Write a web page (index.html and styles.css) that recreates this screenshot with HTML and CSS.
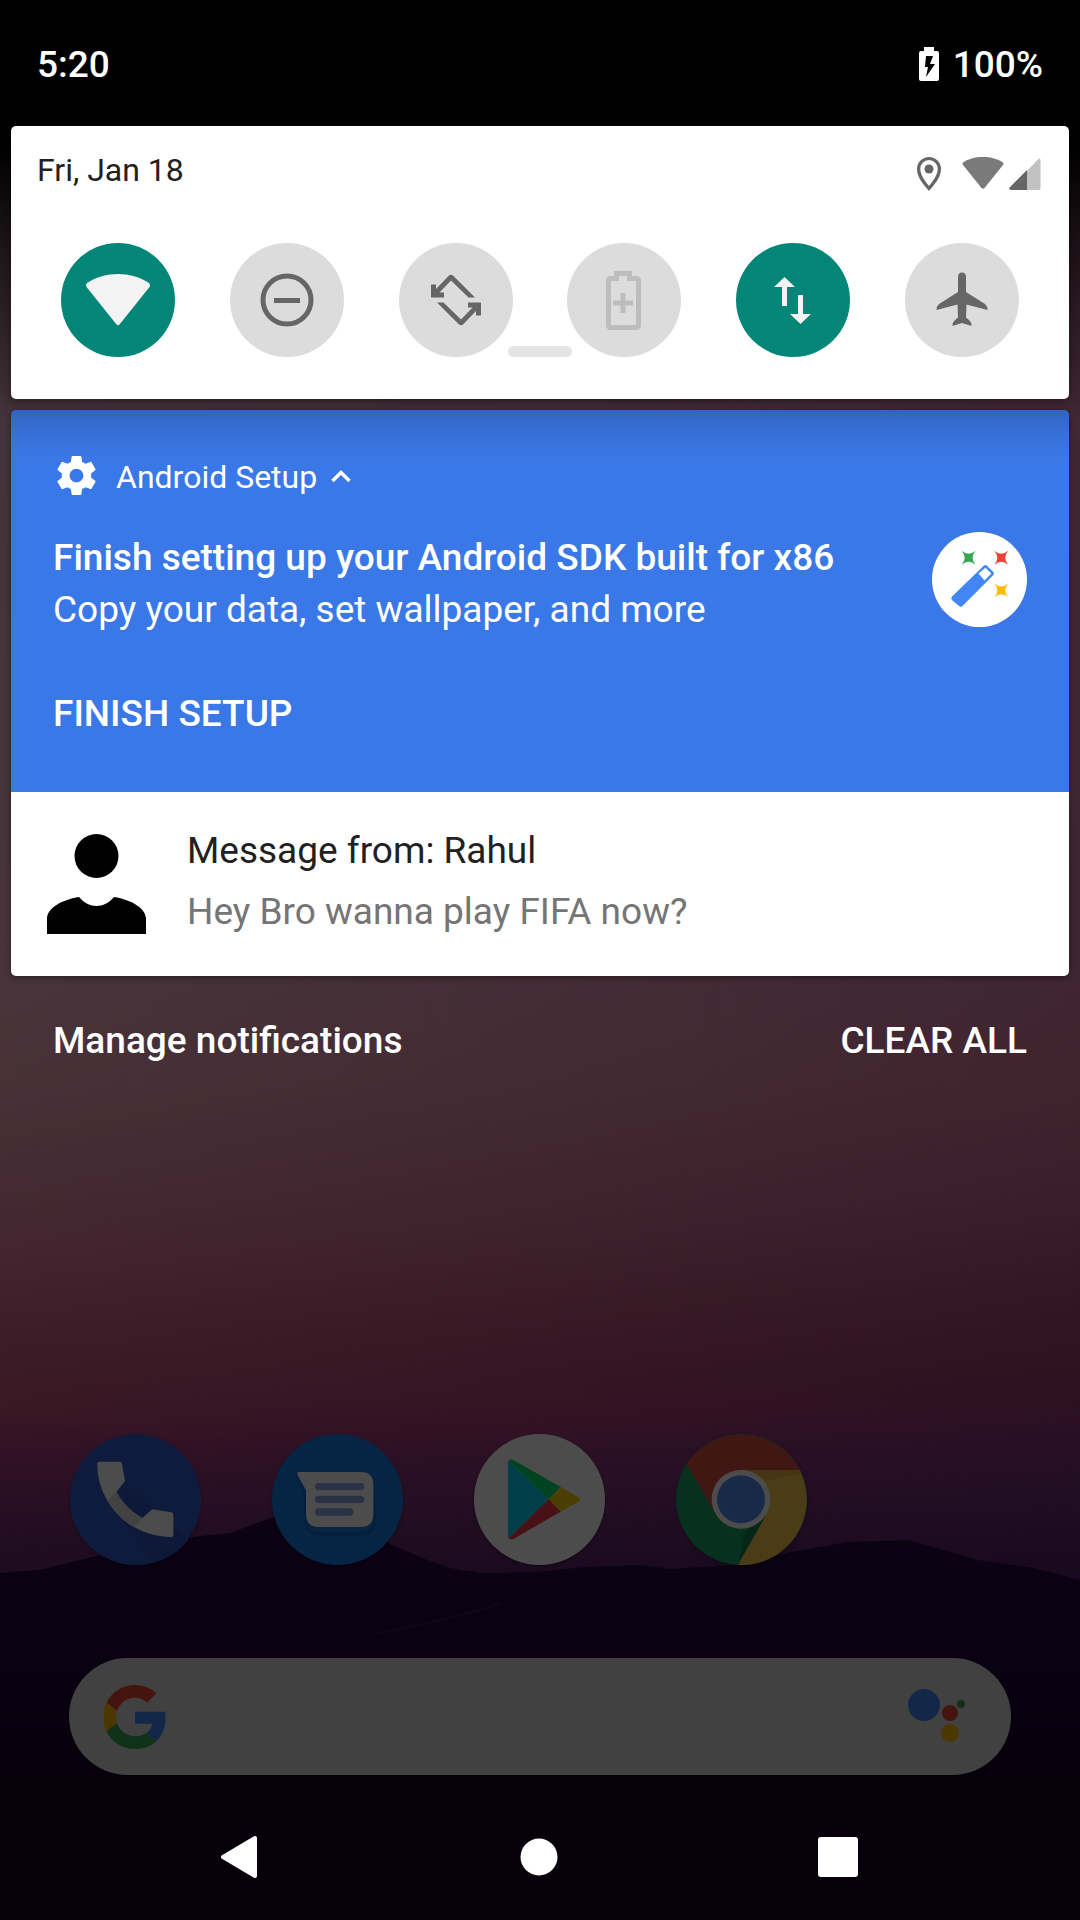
FILE: index.html
```html
<!DOCTYPE html>
<html lang="en">
<head>
<meta charset="utf-8">
<meta name="viewport" content="width=device-width, initial-scale=1">
<title>Notification shade</title>
<link rel="stylesheet" href="styles.css">
</head>
<body>
<div class="screen">

  <svg class="wallpaper" viewBox="0 0 1080 1920" preserveAspectRatio="none" aria-hidden="true">
    <defs>
      <linearGradient id="sky-west" x1="0" y1="400" x2="0" y2="1580" gradientUnits="userSpaceOnUse">
        <stop offset="0" stop-color="#e3aac3"/>
        <stop offset=".48" stop-color="#f2b2c6"/>
        <stop offset=".576" stop-color="#f0a7bb"/>
        <stop offset=".72" stop-color="#e07f9d"/>
        <stop offset=".805" stop-color="#c86182"/>
        <stop offset=".856" stop-color="#c15078"/>
        <stop offset=".89" stop-color="#a73c7d"/>
        <stop offset=".958" stop-color="#782f71"/>
        <stop offset="1" stop-color="#5f2669"/>
      </linearGradient>
      <linearGradient id="sky-east" x1="0" y1="400" x2="0" y2="1580" gradientUnits="userSpaceOnUse">
        <stop offset="0" stop-color="#dc85ad"/>
        <stop offset=".48" stop-color="#d57fa7"/>
        <stop offset=".576" stop-color="#d57899"/>
        <stop offset=".678" stop-color="#c1648c"/>
        <stop offset=".763" stop-color="#a74b71"/>
        <stop offset=".83" stop-color="#993c6b"/>
        <stop offset=".864" stop-color="#933578"/>
        <stop offset=".907" stop-color="#783278"/>
        <stop offset=".958" stop-color="#622871"/>
        <stop offset="1" stop-color="#50216b"/>
      </linearGradient>
      <linearGradient id="fade-east">
        <stop offset="0" stop-color="#000"/>
        <stop offset="1" stop-color="#fff"/>
      </linearGradient>
      <mask id="east-mask"><rect width="1080" height="1920" fill="url(#fade-east)"/></mask>
      <linearGradient id="hills" x1="0" y1="1510" x2="0" y2="1920" gradientUnits="userSpaceOnUse">
        <stop offset="0" stop-color="#28083f"/>
        <stop offset=".35" stop-color="#25053c"/>
        <stop offset=".65" stop-color="#170227"/>
        <stop offset="1" stop-color="#170220"/>
      </linearGradient>
    </defs>
    <rect width="1080" height="1920" fill="url(#sky-west)"/>
    <rect width="1080" height="1920" fill="url(#sky-east)" mask="url(#east-mask)"/>
    <path fill="url(#hills)" d="M0 1573 40 1570 96 1556 150 1544 200 1536 230 1533 270 1518 300 1513 340 1510 390 1544 425 1559 450 1568 482 1573 537 1572 585 1567 640 1565 671 1569 730 1565 792 1552 847 1542 909 1540 978 1560 1033 1568 1080 1580V1920H0Z"/>
    <path fill="none" stroke="#34144a" stroke-width="2" d="M375 1634Q440 1622 500 1604"/>
  </svg>

  <main class="home">
    <nav class="dock" aria-label="Favorite apps">
      <a class="app" href="#phone" aria-label="Phone">
        <svg viewBox="0 0 393 393">
          <circle cx="196.500" cy="196.500" r="196.500" fill="#335cc8"/>
          <path fill="#2f56c0" d="M165 141 355 318A196 196 0 0 1 250 386L160 270Z"/>
          <path fill="#fff" d="M90 83H149Q155 83 156 89L165 141 139 174C158 208 183 233 217 252L247 226 304 235Q310 236 310 242V303Q310 309 304 309C182 309 82 210 82 91Q82 83 90 83Z"/>
          <path fill="#dedede" d="M113 199 139 174C158 208 183 233 217 252L193 279C157 260 134 236 113 199Z"/>
        </svg>
      </a>
      <a class="app" href="#messages" aria-label="Messages">
        <svg viewBox="0 0 393 393">
          <circle cx="196.500" cy="196.500" r="196.500" fill="#1778e0"/>
          <path fill="#0f5fb8" d="M76 124 104 184V256Q106 294 142 294H266Q304 292 304 250L312 180V270Q308 304 266 306H142Q100 304 96 260V190Z" opacity=".5"/>
          <path fill="#fff" d="M82 114H266Q304 114 304 152V241Q304 279 266 279H140Q102 279 102 241V169L77 123Q73 114 82 114Z"/>
          <path stroke="#8ca8f0" stroke-width="22" stroke-linecap="round" d="M140 158H266M140 196H266M140 234H233"/>
        </svg>
      </a>
      <a class="app" href="#play" aria-label="Play Store">
        <svg viewBox="0 0 393 393">
          <circle cx="196.500" cy="196.500" r="196.500" fill="#fff"/>
          <path fill="#00d0f5" d="M104 80 224 196 104 313Q102 311 102 304V89Q102 82 104 80Z"/>
          <path fill="#00e070" d="M104 80Q111 73 122 80L260 159 224 196Z"/>
          <path fill="#ffd000" d="M260 159 311 188Q325 197 311 205L260 233 224 196Z"/>
          <path fill="#f5364c" d="M104 313 224 196 260 233 120 314Q110 318 104 313Z"/>
        </svg>
      </a>
      <a class="app" href="#chrome" aria-label="Chrome">
        <svg viewBox="0 0 393 393">
          <circle cx="196.500" cy="196.500" r="196.500" fill="#1aa064"/>
          <path fill="#db4f40" d="M32 90A196.500 196.500 0 0 1 371 108H195L119 240Z"/>
          <path fill="#f7c84a" d="M371 108A196.500 196.500 0 0 1 185 393L271 240 195 108Z"/>
          <path fill="#e6b642" d="M215 108H371L376 118 275 140Z"/>
          <path fill="#148050" d="M185 393 264 254 210 290Z"/>
          <circle cx="195" cy="196" r="88" fill="#fff"/>
          <circle cx="195" cy="196" r="72" fill="#568cf0"/>
        </svg>
      </a>
    </nav>
    <form class="search" role="search">
      <svg class="google" viewBox="3 2 42 44" aria-hidden="true">
        <path fill="#ea4335" d="M24 9.500c3.540 0 6.710 1.220 9.210 3.600l6.850-6.850C35.900 2.380 30.470 0 24 0 14.620 0 6.510 5.380 2.560 13.220l7.980 6.190C12.430 13.720 17.740 9.500 24 9.500z" transform="translate(2 2) scale(.917)"/>
        <path fill="#4285f4" d="M46.980 24.550c0-1.570-.15-3.090-.38-4.550H24v9.020h12.940c-.58 2.960-2.260 5.480-4.780 7.180l7.730 6c4.510-4.180 7.090-10.360 7.090-17.650z" transform="translate(2 2) scale(.917)"/>
        <path fill="#fbbc05" d="M10.530 28.590c-.48-1.450-.76-2.990-.76-4.590s.27-3.140.76-4.590l-7.980-6.190C.92 16.460 0 20.120 0 24c0 3.880.92 7.540 2.560 10.780l7.970-6.190z" transform="translate(2 2) scale(.917)"/>
        <path fill="#34a853" d="M24 48c6.480 0 11.930-2.130 15.890-5.810l-7.730-6c-2.150 1.450-4.920 2.300-8.160 2.300-6.260 0-11.570-4.220-13.470-9.910l-7.980 6.190C6.510 42.620 14.620 48 24 48z" transform="translate(2 2) scale(.917)"/>
      </svg>
      <input class="search-box" type="search" aria-label="Google search">
      <button class="assistant" type="button" aria-label="Google Assistant">
        <svg viewBox="0 0 60 60">
          <circle cx="17" cy="18" r="16" fill="#4285f4"/>
          <circle cx="43" cy="26" r="8" fill="#ea4335"/>
          <circle cx="54" cy="17" r="4" fill="#34a853"/>
          <circle cx="43" cy="46" r="9" fill="#fbbc05"/>
        </svg>
      </button>
    </form>
  </main>

  <div class="shade">
    <header class="status">
      <time datetime="17:20">5:20</time>
      <div class="battery">
        <svg class="battery-icon" viewBox="0 0 20 34" aria-hidden="true">
          <path fill="#fff" fill-rule="evenodd" d="M5 0H15V4H18Q20 4 20 6V32Q20 34 18 34H2Q0 34 0 32V6Q0 4 2 4H5ZM7 9 6 20H9L7 30 16 17H11L14 9Z"/>
        </svg>
        <span>100%</span>
      </div>
    </header>

    <section class="quick" aria-label="Quick settings">
      <div class="quick-head">
        <time datetime="01-18">Fri, Jan 18</time>
        <svg class="signals" viewBox="0 0 124 34" role="img" aria-label="Location on, Wi-Fi connected, mobile signal half">
          <path fill="#666" fill-rule="evenodd" d="M12 0A12 12 0 0 0 0 12C0 20 6 27 12 34 18 27 24 20 24 12A12 12 0 0 0 12 0ZM12 3A8.700 8.700 0 0 1 20.700 12C20.700 17 17 23 12 29 7 23 3.300 17 3.300 12A8.700 8.700 0 0 1 12 3Z"/>
          <circle cx="12" cy="12" r="4.500" fill="#666"/>
          <path fill="#7a7a7a" d="M46 5.500C58-2 74-2 86 5.500Q87 6.500 86 8L67.500 31Q66 32.500 64.500 31L46 8Q45 6.500 46 5.500Z"/>
          <path fill="#c2c2c2" d="M110 14 120.500 3Q123 0 123.500 3V31Q123.500 33 122 33H110Z"/>
          <path fill="#666" d="M110 13V33H94Q91 32.500 93 30Z"/>
        </svg>
      </div>
      <div class="tiles">
        <button class="tile on" type="button" aria-pressed="true" aria-label="Wi-Fi">
          <svg viewBox="-57 -57 114 114"><path fill="#f4f4f4" d="M-31-17C-13-29 13-29 31-17Q33-15 31.500-13L1.500 24.500Q0 26-1.500 24.500L-31.500-13Q-33-15-31-17Z"/></svg>
        </button>
        <button class="tile" type="button" aria-pressed="false" aria-label="Do not disturb">
          <svg viewBox="-57 -57 114 114"><g fill="none" stroke="#666" stroke-width="5"><circle r="24"/><path d="M-13 .5H13"/></g></svg>
        </button>
        <button class="tile" type="button" aria-pressed="false" aria-label="Auto-rotate">
          <svg viewBox="-57 -57 114 114"><g fill="#666"><path id="turn" d="M-25-15.500H-20V-11L-7-24.500Q-5-26-3-24.500L19-2.500H12.500L-5-19.500-16.500-7.500H-12V-2.500H-25Z"/><use href="#turn" transform="rotate(180)"/></g></svg>
        </button>
        <button class="tile" type="button" aria-label="Battery Saver" disabled>
          <svg viewBox="-57 -57 114 114"><g fill="none" stroke="#bdbdbd" stroke-width="5"><path d="M-7.500-26.500H5.500V-21.500H12Q14.500-21.500 14.500-19V25Q14.500 27.500 12 27.500H-13Q-15.500 27.500-15.500 25V-19Q-15.500-21.500-13-21.500H-7.500Z"/><path d="M-11 3H9M-1-7V13"/></g></svg>
        </button>
        <button class="tile on" type="button" aria-pressed="true" aria-label="Mobile data">
          <svg viewBox="-57 -57 114 114"><path fill="#f4f4f4" d="M-8.500-23 2-13H-6V6H-11V-13H-19ZM7.500 24-3 14H5V-5H10V14H18Z"/></svg>
        </button>
        <button class="tile" type="button" aria-pressed="false" aria-label="Airplane mode">
          <svg viewBox="-57 -57 114 114"><path fill="#666" d="M0-27.500Q4-27.500 4-23V-8L23 4Q25.500 6 25.500 10L4.500 4.500 4 17.500 7 20Q9.500 22 9.500 26L0 23-9.500 26Q-9.500 22-7 20L-4 17.500-4.500 4.500-25.500 10Q-25.500 6-23 4L-4-8V-23Q-4-27.500 0-27.500Z"/></svg>
        </button>
      </div>
      <span class="handle"></span>
    </section>

    <section class="notices" aria-label="Notifications">
      <article class="setup">
        <header class="setup-head">
          <svg class="gear" viewBox="0 0 24 24" aria-hidden="true"><path fill="#fff" d="M19.430 12.980c.04-.32.07-.64.07-.98s-.03-.66-.07-.98l2.110-1.650c.19-.15.24-.42.12-.64l-2-3.460c-.12-.22-.39-.3-.61-.22l-2.490 1c-.52-.4-1.080-.73-1.690-.98l-.38-2.650C14.460 2.180 14.250 2 14 2h-4c-.25 0-.46.18-.49.42l-.38 2.650c-.61.25-1.170.59-1.690.98l-2.490-1c-.23-.09-.49 0-.61.22l-2 3.460c-.13.22-.07.49.12.64l2.110 1.650c-.04.32-.07.65-.07.98s.03.66.07.98l-2.110 1.650c-.19.15-.24.42-.12.64l2 3.460c.12.22.39.3.61.22l2.490-1c.52.4 1.080.73 1.690.98l.38 2.650c.03.24.24.42.49.42h4c.25 0 .46-.18.49-.42l.38-2.650c.61-.25 1.170-.59 1.690-.98l2.490 1c.23.09.49 0 .61-.22l2-3.460c.12-.22.07-.49-.12-.64l-2.110-1.650zM12 15.500c-1.930 0-3.500-1.570-3.500-3.500s1.570-3.500 3.500-3.500 3.500 1.570 3.500 3.500-1.570 3.500-3.500 3.500z"/></svg>
          <span class="app-name">Android Setup</span>
          <button class="collapse" type="button" aria-label="Collapse">
            <svg viewBox="0 0 20 14"><path fill="none" stroke="#fff" stroke-width="3.500" d="M1.500 12 10 3.500 18.500 12"/></svg>
          </button>
        </header>
        <div class="setup-body">
          <div>
            <h2 class="setup-title">Finish setting up your Android SDK built for x86</h2>
            <p class="setup-text">Copy your data, set wallpaper, and more</p>
          </div>
          <svg class="wand" viewBox="-48 -48 96 96" aria-hidden="true">
            <defs><path id="spark" d="M-7-7Q0-1 7-7 1 0 7 7 0 1-7 7-1 0-7-7Z"/></defs>
            <circle r="48" fill="#fff"/>
            <path fill="#4285f4" stroke="#4285f4" stroke-width="5" stroke-linejoin="round" d="M6-12 12-6-19 25-26 19Z"/>
            <path fill="#fff" d="M6-12 12-6 5 1-1-6Z"/>
            <use href="#spark" x="-11" y="-22" fill="#34a853"/>
            <use href="#spark" x="22" y="-22" fill="#ea4335"/>
            <use href="#spark" x="22" y="11" fill="#fbbc05"/>
          </svg>
        </div>
        <button class="action" type="button">FINISH SETUP</button>
      </article>
      <article class="message">
        <svg class="person" viewBox="0 0 99 100" aria-hidden="true">
          <circle cx="49.500" cy="22" r="22"/>
          <path d="M0 100V84C1 74 14 66 32 63 42 75 57 75 67 63 85 66 98 74 99 84V100Z"/>
        </svg>
        <div>
          <h2 class="message-title">Message from: Rahul</h2>
          <p class="message-text">Hey Bro wanna play FIFA now?</p>
        </div>
      </article>
    </section>

    <footer class="controls">
      <button class="action" type="button">Manage notifications</button>
      <button class="action" type="button">CLEAR ALL</button>
    </footer>

    <nav class="system" aria-label="System navigation">
      <button class="key" type="button" aria-label="Back"><svg viewBox="0 0 44 44"><path fill="#fff" stroke="#fff" stroke-width="4" stroke-linejoin="round" d="M37 3V41L5 22Z"/></svg></button>
      <button class="key" type="button" aria-label="Home"><svg viewBox="0 0 44 44"><circle cx="22" cy="22" r="18.500" fill="#fff"/></svg></button>
      <button class="key" type="button" aria-label="Overview"><svg viewBox="0 0 44 44"><rect x="2" y="2" width="40" height="40" rx="3" fill="#fff"/></svg></button>
    </nav>
  </div>
</div>
</body>
</html>
```

FILE: styles.css
```css
* {
  box-sizing: border-box;
}

body {
  margin: 0;
  background: #000;
  color: #fff;
  font: 400 37px/44px Roboto, sans-serif;
}

h2,
p {
  margin: 0;
  font-size: inherit;
  font-weight: 400;
}

svg {
  display: block;
}

button {
  padding: 0;
  border: 0;
  background: none;
  color: inherit;
  font: inherit;
}

/* Wallpaper, home screen and shade share one cell and stack in order. */
.screen {
  display: grid;
  grid-template: minmax(100vh, auto) / minmax(0, 1fr);
}

.wallpaper,
.home,
.shade {
  grid-area: 1 / 1;
}

.wallpaper {
  width: 100%;
  height: 100%;
}

/* Home screen */
.home {
  display: flex;
  flex-direction: column;
  justify-content: flex-end;
  gap: 93px;
  padding-bottom: 145px;
}

.dock {
  display: grid;
  grid-template-columns: repeat(5, 1fr);
  justify-items: center;
  padding: 0 36px 0 34px;
}

.app {
  width: 131px;
  border-radius: 50%;
  box-shadow: 0 2px 4px rgba(0, 0, 0, 0.3);
}

.search {
  display: flex;
  align-items: center;
  height: 117px;
  margin: 0 69px;
  padding: 0 44px 0 35px;
  border-radius: 59px;
  background: #d9d9db;
}

.google {
  width: 62px;
  height: 64px;
}

.search-box {
  flex: 1;
  min-width: 0;
  height: 100%;
  border: 0;
  background: none;
  font: inherit;
}

.assistant {
  width: 60px;
}

/* Shade: dims the home screen and turns solid black behind the status bar. */
.shade {
  position: relative;
  display: flex;
  flex-direction: column;
  background:
    linear-gradient(#000 140px, rgba(0, 0, 0, 0.6) 240px, transparent 420px),
    rgba(0, 0, 0, 0.7);
}

.status {
  display: flex;
  align-items: center;
  justify-content: space-between;
  height: 126px;
  padding: 4px 37px 0;
  font-weight: 500;
}

.battery {
  display: flex;
  align-items: center;
  gap: 14px;
}

.battery-icon {
  width: 20px;
  height: 34px;
  margin-bottom: 2px;
}

.quick {
  position: relative;
  margin: 0 11px;
  padding: 25px 26px 42px;
  border-radius: 5px;
  background: #fff;
  color: #212121;
  box-shadow: 0 2px 8px rgba(0, 0, 0, 0.4);
}

.quick-head {
  display: flex;
  justify-content: space-between;
  font-size: 32px;
  line-height: 38px;
}

.signals {
  width: 124px;
  height: 34px;
  margin: 6px 2px 0 0;
}

.tiles {
  display: flex;
  justify-content: space-between;
  margin-top: 52px;
  padding: 0 24px;
}

.tile {
  width: 114px;
  height: 114px;
  border-radius: 50%;
  background: #dcdcdc;
}

.tile.on {
  background: #038577;
}

.handle {
  position: absolute;
  bottom: 42px;
  left: calc(50% - 32px);
  width: 64px;
  height: 11px;
  border-radius: 6px;
  background: #e4e4e4;
}

.notices {
  margin: 11px 11px 0;
  border-radius: 5px;
  overflow: hidden;
  box-shadow: 0 2px 6px rgba(0, 0, 0, 0.4);
}

.setup {
  padding: 42px;
  padding-bottom: 52px;
  background: linear-gradient(rgba(0, 0, 0, 0.16), rgba(0, 0, 0, 0.06) 28px, transparent 50px) #3b78e7;
}

.setup-head {
  display: flex;
  align-items: center;
  font-size: 32px;
  line-height: 38px;
}

.gear {
  width: 47px;
  height: 47px;
}

.app-name {
  margin: 2px 14px 0 16px;
}

.collapse {
  width: 20px;
}

.setup-body {
  display: flex;
  justify-content: space-between;
  align-items: flex-start;
  margin-top: 33px;
  line-height: 52px;
}

.setup-title {
  font-weight: 500;
}

.wand {
  flex: none;
  width: 95px;
  height: 95px;
}

.action {
  font-weight: 500;
}

.setup .action {
  display: block;
  margin-top: 52px;
  line-height: 52px;
}

.message {
  display: flex;
  align-items: center;
  gap: 41px;
  padding: 28px 36px 34px;
  background: #fff;
  line-height: 61px;
}

.person {
  flex: none;
  width: 99px;
  height: 100px;
  margin-top: 6px;
}

.message-title {
  color: #212121;
}

.message-text {
  color: #757575;
}

.controls {
  display: flex;
  justify-content: space-between;
  margin-top: 43px;
  padding: 0 53px;
}

.system {
  display: grid;
  grid-template-columns: repeat(3, 1fr);
  justify-items: center;
  align-items: center;
  height: 126px;
  margin-top: auto;
  padding: 0 92px 0 90px;
}

.key {
  width: 44px;
}
```
